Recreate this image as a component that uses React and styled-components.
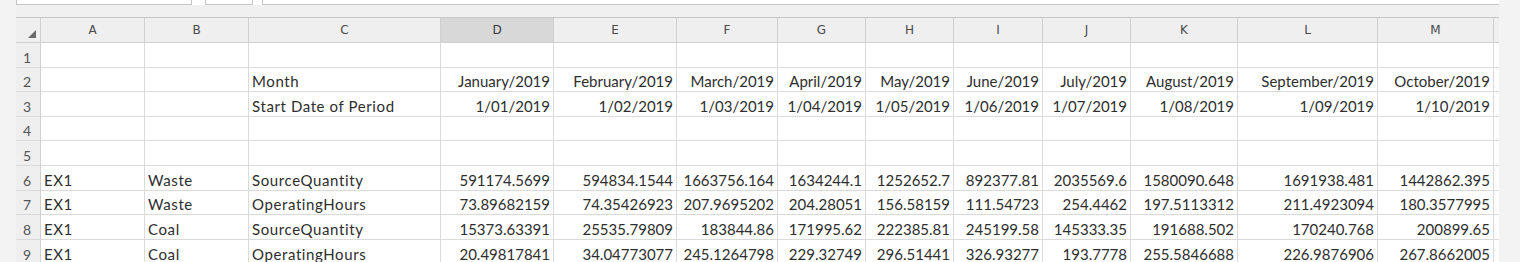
import React from 'react'
import styled, { createGlobalStyle } from 'styled-components'

const GlobalStyle = createGlobalStyle`
  html, body {
    margin: 0;
    padding: 0;
    background: #f3f3f3;
  }
`

const COLUMNS = [
  { key: 'A', width: 104 },
  { key: 'B', width: 104 },
  { key: 'C', width: 192 },
  { key: 'D', width: 113 },
  { key: 'E', width: 123 },
  { key: 'F', width: 101 },
  { key: 'G', width: 88 },
  { key: 'H', width: 88 },
  { key: 'I', width: 89 },
  { key: 'J', width: 88 },
  { key: 'K', width: 107 },
  { key: 'L', width: 140 },
  { key: 'M', width: 116 },
]

const ROW_HEIGHTS = [25, 24, 25, 24, 25, 25, 24, 25, 25]

// each row: [A, B, C, ...D..M], numbers/dates are right aligned
const ROWS = [
  [],
  ['', '', 'Month', 'January/2019', 'February/2019', 'March/2019', 'April/2019', 'May/2019', 'June/2019', 'July/2019', 'August/2019', 'September/2019', 'October/2019'],
  ['', '', 'Start Date of Period', '1/01/2019', '1/02/2019', '1/03/2019', '1/04/2019', '1/05/2019', '1/06/2019', '1/07/2019', '1/08/2019', '1/09/2019', '1/10/2019'],
  [],
  [],
  ['EX1', 'Waste', 'SourceQuantity', '591174.5699', '594834.1544', '1663756.164', '1634244.1', '1252652.7', '892377.81', '2035569.6', '1580090.648', '1691938.481', '1442862.395'],
  ['EX1', 'Waste', 'OperatingHours', '73.89682159', '74.35426923', '207.9695202', '204.28051', '156.58159', '111.54723', '254.4462', '197.5113312', '211.4923094', '180.3577995'],
  ['EX1', 'Coal', 'SourceQuantity', '15373.63391', '25535.79809', '183844.86', '171995.62', '222385.81', '245199.58', '145333.35', '191688.502', '170240.768', '200899.65'],
  ['EX1', 'Coal', 'OperatingHours', '20.49817841', '34.04773077', '245.1264798', '229.32749', '296.51441', '326.93277', '193.7778', '255.5846688', '226.9876906', '267.8662005'],
]

const SpreadsheetView = () => {
  const template = `25px ${COLUMNS.map(c => c.width + 'px').join(' ')} 5px`
  const rowTemplate = `25px ${ROW_HEIGHTS.map(h => h + 'px').join(' ')}`

  return (
    <Page>
      <GlobalStyle />
      <Gutter />
      <Sheet>
        <FormulaBar>
          <NameBox />
          <FxBox />
          <FormulaInput />
        </FormulaBar>
        <Band />
        <Grid style={{ gridTemplateColumns: template, gridTemplateRows: rowTemplate }}>
          <Corner>
            <svg width="8" height="8" viewBox="0 0 8 8">
              <polygon points="8,0 8,8 0,8" fill="#6b6b6b" />
            </svg>
          </Corner>
          {COLUMNS.map(col => (
            <ColHead key={col.key} $active={col.key === 'D'}>{col.key}</ColHead>
          ))}
          <HeadFiller />

          {ROWS.map((row, r) => (
            <React.Fragment key={r}>
              <RowHead>{r + 1}</RowHead>
              {COLUMNS.map((col, c) => {
                const value = row[c] || ''
                return (
                  <Cell key={col.key} $right={c >= 3}>{value}</Cell>
                )
              })}
              <Filler />
            </React.Fragment>
          ))}
        </Grid>
      </Sheet>
    </Page>
  )
}

const Page = styled.div`
  display: flex;
  height: 262px;
  overflow: hidden;
  background: #f3f3f3;
`

const Gutter = styled.div`
  width: 16px;
  flex-shrink: 0;
`

const Sheet = styled.div`
  width: 1483px;
  flex-shrink: 0;
  display: flex;
  flex-direction: column;
  background: #ffffff;
  & > * {
    flex-shrink: 0;
  }
`

const FormulaBar = styled.div`
  display: flex;
  height: 5px;
  background: #ffffff;
`

const BoxBase = styled.div`
  box-sizing: border-box;
  height: 5px;
  border: 1px solid #c6c6c6;
  border-top: none;
`

const NameBox = styled(BoxBase)`
  width: 176px;
  margin-right: 13px;
`

const FxBox = styled(BoxBase)`
  width: 48px;
  margin-right: 9px;
`

const FormulaInput = styled(BoxBase)`
  flex: 1;
  border-right: none;
`

const Band = styled.div`
  box-sizing: border-box;
  height: 13px;
  background: #f0f0f0;
  border-bottom: 1px solid #c8c8c8;
`

const Grid = styled.div`
  display: grid;
  font-family: Lato, "Liberation Sans", sans-serif;
`

const HeaderBase = styled.div`
  box-sizing: border-box;
  background: #efefef;
  border-right: 1px solid #d0d0d0;
  border-bottom: 1px solid #d0d0d0;
  color: #4a4a4a;
  font-family: "DejaVu Sans", sans-serif;
  font-size: 12px;
  display: flex;
  align-items: center;
  justify-content: center;
`

const Corner = styled(HeaderBase)`
  align-items: flex-end;
  justify-content: flex-end;
  padding: 0 4px 4px 0;
`

const ColHead = styled(HeaderBase)`
  background: ${p => (p.$active ? '#d8d8d8' : '#efefef')};
  color: ${p => (p.$active ? '#3a3a3a' : '#4a4a4a')};
`

const HeadFiller = styled(HeaderBase)`
  border-right: none;
`

const RowHead = styled(HeaderBase)`
  align-items: flex-end;
  padding: 0 2px 1px 0;
  font-family: Lato, "Liberation Sans", sans-serif;
  font-size: 14px;
  color: #555555;
  border-bottom-color: #dadada;
`

const Cell = styled.div`
  box-sizing: border-box;
  display: flex;
  align-items: flex-end;
  justify-content: ${p => (p.$right ? 'flex-end' : 'flex-start')};
  padding: 0 3px 1px 3px;
  border-right: 1px solid #dadada;
  border-bottom: 1px solid #dadada;
  font-size: 15px;
  letter-spacing: ${p => (p.$right ? '0' : '0.6px')};
  color: #2e2e2e;
  white-space: nowrap;
  overflow: hidden;
`

const Filler = styled.div`
  border-bottom: 1px solid #dadada;
`

export default SpreadsheetView
